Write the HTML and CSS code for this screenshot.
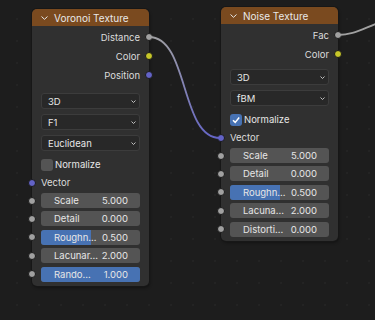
FILE: index.html
```html
<!DOCTYPE html>
<html>
  <head>
    <meta charset="utf-8">
    <title>Node Editor</title>
    <link rel="stylesheet" href="styles.css">
  </head>

  <body>
    <div class="editor">
      <!-- Links between sockets -->
      <svg class="links" width="375" height="320" viewBox="0 0 375 320">
        <defs>
          <linearGradient id="linkGrad" gradientUnits="userSpaceOnUse" x1="149" y1="37" x2="220" y2="138">
            <stop offset="0" stop-color="#a1a1a1"/>
            <stop offset="1" stop-color="#6363c7"/>
          </linearGradient>
        </defs>
        <path d="M149 37 C 189 37, 180 138, 220 138" fill="none" stroke="url(#linkGrad)" stroke-width="1.8"/>
        <path d="M338 35 C 352 35, 360 30, 378 23" fill="none" stroke="#a1a1a1" stroke-width="1.8"/>
      </svg>

      <!-- Voronoi Texture node -->
      <div class="node node-voronoi">
        <div class="node-header">
          <svg class="collapse" width="7" height="4" viewBox="0 0 7 4"><path d="M0.5 0.5 L3.5 3.3 L6.5 0.5" fill="none" stroke="#e6e6e6" stroke-width="1"/></svg>
          <span>Voronoi Texture</span>
        </div>
        <div class="node-body">
          <div class="row row-out"><span>Distance</span><i class="socket socket-float"></i></div>
          <div class="row row-out"><span>Color</span><i class="socket socket-color"></i></div>
          <div class="row row-out"><span>Position</span><i class="socket socket-vector"></i></div>

          <div class="menus">
            <div class="menu"><span>3D</span><svg width="5" height="3" viewBox="0 0 5 3"><path d="M0.5 0.5 L2.5 2.5 L4.5 0.5" fill="none" stroke="#d0d0d0" stroke-width="0.9"/></svg></div>
            <div class="menu"><span>F1</span><svg width="5" height="3" viewBox="0 0 5 3"><path d="M0.5 0.5 L2.5 2.5 L4.5 0.5" fill="none" stroke="#d0d0d0" stroke-width="0.9"/></svg></div>
            <div class="menu"><span>Euclidean</span><svg width="5" height="3" viewBox="0 0 5 3"><path d="M0.5 0.5 L2.5 2.5 L4.5 0.5" fill="none" stroke="#d0d0d0" stroke-width="0.9"/></svg></div>
          </div>

          <div class="check-row"><span class="checkbox"></span><span>Normalize</span></div>
          <div class="row row-in"><i class="socket socket-vector"></i><span>Vector</span></div>

          <div class="fields">
            <div class="field"><i class="socket socket-float"></i><span>Scale</span><span>5.000</span></div>
            <div class="field"><i class="socket socket-float"></i><span>Detail</span><span>0.000</span></div>
            <div class="field"><span class="fill" style="width: 50%"></span><i class="socket socket-float"></i><span>Roughn...</span><span>0.500</span></div>
            <div class="field"><i class="socket socket-float"></i><span>Lacunar...</span><span>2.000</span></div>
            <div class="field"><span class="fill full" style="width: 100%"></span><i class="socket socket-float"></i><span>Rando...</span><span>1.000</span></div>
          </div>
        </div>
      </div>

      <!-- Noise Texture node -->
      <div class="node node-noise">
        <div class="node-header">
          <svg class="collapse" width="7" height="4" viewBox="0 0 7 4"><path d="M0.5 0.5 L3.5 3.3 L6.5 0.5" fill="none" stroke="#e6e6e6" stroke-width="1"/></svg>
          <span>Noise Texture</span>
        </div>
        <div class="node-body">
          <div class="row row-out"><span>Fac</span><i class="socket socket-float"></i></div>
          <div class="row row-out"><span>Color</span><i class="socket socket-color"></i></div>

          <div class="menus">
            <div class="menu"><span>3D</span><svg width="5" height="3" viewBox="0 0 5 3"><path d="M0.5 0.5 L2.5 2.5 L4.5 0.5" fill="none" stroke="#d0d0d0" stroke-width="0.9"/></svg></div>
            <div class="menu"><span>fBM</span><svg width="5" height="3" viewBox="0 0 5 3"><path d="M0.5 0.5 L2.5 2.5 L4.5 0.5" fill="none" stroke="#d0d0d0" stroke-width="0.9"/></svg></div>
          </div>

          <div class="check-row">
            <span class="checkbox checked">
              <svg width="10" height="10" viewBox="0 0 10 10"><path d="M2 5.2 L4.2 7.4 L8.2 2.6" fill="none" stroke="#ffffff" stroke-width="1.5"/></svg>
            </span>
            <span>Normalize</span>
          </div>
          <div class="row row-in"><i class="socket socket-vector"></i><span>Vector</span></div>

          <div class="fields">
            <div class="field"><i class="socket socket-float"></i><span>Scale</span><span>5.000</span></div>
            <div class="field"><i class="socket socket-float"></i><span>Detail</span><span>0.000</span></div>
            <div class="field"><span class="fill" style="width: 50%"></span><i class="socket socket-float"></i><span>Roughn...</span><span>0.500</span></div>
            <div class="field"><i class="socket socket-float"></i><span>Lacuna...</span><span>2.000</span></div>
            <div class="field"><i class="socket socket-float"></i><span>Distorti...</span><span>0.000</span></div>
          </div>
        </div>
      </div>
    </div>
  </body>
</html>
```

FILE: styles.css
```css
/* Node editor look: dark canvas, grey nodes, brown texture headers */

* {
  margin: 0;
  padding: 0;
  box-sizing: border-box;
}

body {
  font-family: Inter, "DejaVu Sans", sans-serif;
  font-size: 9.5px;
  color: #e6e6e6;
  background-color: #1d1d1d;
}

/* Canvas with faint dot grid */
.editor {
  position: relative;
  width: 375px;
  height: 320px;
  overflow: hidden;
  background-color: #1d1d1d;
  background-image: radial-gradient(circle, #232323 0.7px, transparent 1.1px);
  background-size: 22px 22px;
  background-position: 6px 8px;
}

.links {
  position: absolute;
  left: 0;
  top: 0;
  z-index: 2;
  pointer-events: none;
}

/* Nodes sit on the canvas at their own place */
.node {
  position: absolute;
  width: 117px;
  background-color: #303030;
  border-radius: 5px;
  box-shadow: 0 0 0 1px #171717, 1px 2px 3px rgba(0, 0, 0, 0.35);
  z-index: 1;
}
.node-voronoi {
  left: 32px;
  top: 9px;
}
.node-noise {
  left: 221px;
  top: 7px;
}

.node-header {
  height: 17px;
  display: flex;
  align-items: center;
  gap: 6px;
  padding-left: 9px;
  background-color: #7a4a1f;
  border-radius: 5px 5px 0 0;
  font-size: 10px;
  color: #e8e8e8;
}

.node-body {
  padding: 1.5px 0 4px 0;
  display: flex;
  flex-direction: column;
}

/* Socket rows */
.row {
  position: relative;
  height: 19px;
  display: flex;
  align-items: center;
  padding: 0 9px;
  color: #dcdcdc;
}
.row-out {
  justify-content: flex-end;
}
.row-in {
  height: 18px;
}

.socket {
  position: absolute;
  top: 50%;
  width: 8px;
  height: 8px;
  margin-top: -4px;
  border-radius: 50%;
  border: 1px solid #1a1a1a;
  z-index: 3;
}
.row-out .socket {
  right: -4px;
}
.row-in .socket {
  left: -4px;
}
.socket-float {
  background-color: #a1a1a1;
}
.socket-color {
  background-color: #c7c729;
}
.socket-vector {
  background-color: #6363c7;
}

/* Dropdown menus */
.menus {
  display: flex;
  flex-direction: column;
  gap: 5px;
  padding: 0 9px;
  margin-top: 8.5px;
}
.node-noise .menus {
  margin-top: 5.5px;
}
.menu {
  height: 16px;
  display: flex;
  align-items: center;
  justify-content: space-between;
  padding: 0 3px 0 6px;
  background-color: #282828;
  border: 1px solid #3c3c3c;
  border-radius: 3px;
  color: #e6e6e6;
}

/* Checkbox */
.check-row {
  height: 18px;
  margin-top: 4.5px;
  display: flex;
  align-items: center;
  gap: 2px;
  padding: 0 9px;
  color: #e6e6e6;
}
.checkbox {
  width: 12px;
  height: 12px;
  border-radius: 3px;
  background-color: #545454;
  display: flex;
  align-items: center;
  justify-content: center;
}
.checkbox.checked {
  background-color: #4772b3;
}

/* Number / slider fields */
.fields {
  display: flex;
  flex-direction: column;
  gap: 3.4px;
  padding: 0 9px;
  margin-top: 1.5px;
}
.field {
  position: relative;
  height: 15px;
  display: flex;
  align-items: center;
  justify-content: space-between;
  padding: 0 12px 0 13px;
  background-color: #545454;
  border-radius: 3px;
  color: #e6e6e6;
}
.field span {
  position: relative;
}
.field .fill {
  position: absolute;
  left: 0;
  top: 0;
  bottom: 0;
  background-color: #4772b3;
  border-radius: 3px 0 0 3px;
}
.field .fill.full {
  border-radius: 3px;
}
.field .socket {
  left: -13px;
}
```
